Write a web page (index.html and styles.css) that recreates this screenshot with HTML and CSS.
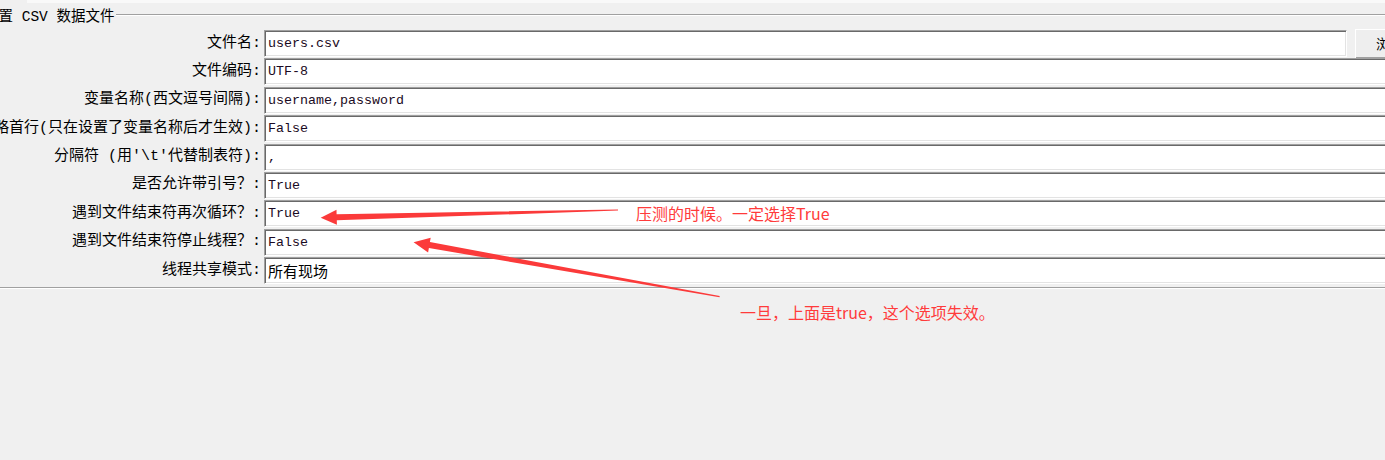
FILE: index.html
```html
<!DOCTYPE html>
<html lang="zh">
<head>
<meta charset="utf-8">
<title>CSV 数据文件设置</title>
<link rel="stylesheet" href="styles.css">
</head>
<body>
<div class="page">
  <div class="topstrip"></div>
  <div class="titlerow">
    <span class="title">设置 CSV 数据文件</span>
    <span class="rule"></span>
  </div>
  <div class="form">
    <div class="lbl">文件名:</div>
    <div class="ctl-row">
      <div class="field first">users.csv</div>
      <div class="btn">浏览...</div>
    </div>
    <div class="lbl">文件编码:</div>
    <div class="field">UTF-8</div>
    <div class="lbl">变量名称(西文逗号间隔):</div>
    <div class="field">username,password</div>
    <div class="lbl">忽略首行(只在设置了变量名称后才生效):</div>
    <div class="field">False</div>
    <div class="lbl">分隔符 (用'\t'代替制表符):</div>
    <div class="field">,</div>
    <div class="lbl">是否允许带引号？:</div>
    <div class="field">True</div>
    <div class="lbl">遇到文件结束符再次循环？:</div>
    <div class="field">True</div>
    <div class="lbl">遇到文件结束符停止线程？:</div>
    <div class="field">False</div>
    <div class="lbl">线程共享模式:</div>
    <div class="field cjk">所有现场</div>
  </div>
  <div class="bottomrule"></div>

  <svg class="overlay" width="1385" height="460" viewBox="0 0 1385 460" xmlns="http://www.w3.org/2000/svg">
    <polygon fill="#fb3a3a" points="618,209.4 336.6,214.3 336.5,209.8 320.7,217.7 336.9,224.8 336.8,220.3 618,210.6"/>
    <polygon fill="#fb3a3a" points="719.7,296.1 429.9,242.1 430.7,237.7 413.6,242.3 428.1,252.5 428.9,248.1 719.5,297.3"/>
  </svg>
  <div class="note note1">压测的时候。一定选择True</div>
  <div class="note note2">一旦，上面是true，这个选项失效。</div>
</div>
</body>
</html>
```

FILE: styles.css
```css
html, body {
  margin: 0;
  padding: 0;
  background: #f0f0f0;
  overflow: hidden;
}

.page {
  position: relative;
  width: 1385px;
  height: 460px;
  overflow: hidden;
  background: #f0f0f0;
  font-family: "Liberation Mono", "Noto Sans CJK SC", monospace;
  color: #000;
}

.topstrip {
  height: 3px;
  margin-left: 27px;
  background: #f9f9f9;
}

.titlerow {
  display: flex;
  align-items: center;
  height: 24px;
  margin-left: -16px;
}

.title {
  font-size: 14.5px;
  line-height: 20px;
  padding-top: 4px;
  white-space: nowrap;
  padding-right: 1px;
}

.rule {
  flex: 1;
  height: 0;
  border-top: 1px solid #a0a0a0;
  border-bottom: 1px solid #ffffff;
  margin-top: 0;
}

.form {
  display: grid;
  grid-template-columns: 264px 1240px;
  grid-auto-rows: 27px;
  row-gap: 1.4px;
  margin-top: 3px;
  width: 1504px;
}

.lbl {
  display: flex;
  justify-content: flex-end;
  align-items: center;
  min-width: 0;
  padding-right: 3px;
  white-space: nowrap;
  font-size: 15px;
  line-height: 20px;
}

.ctl-row {
  display: flex;
  gap: 8px;
  align-items: flex-start;
}

.field {
  box-sizing: border-box;
  height: 27px;
  background: #ffffff;
  border: 1px solid;
  border-color: #a0a0a0 #ffffff #ffffff #a0a0a0;
  box-shadow: inset 1px 1px 0 #696969, inset -1px -1px 0 #e3e3e3;
  padding-left: 3px;
  font-size: 13.33px;
  line-height: 25px;
  white-space: nowrap;
  color: #1a0a22;
}

.field.first {
  width: 1083px;
  flex: none;
}

.field.cjk {
  font-family: "Noto Sans CJK SC", sans-serif;
  font-size: 15px;
  color: #000;
}

.btn {
  box-sizing: border-box;
  flex: none;
  width: 90px;
  height: 30px;
  margin-top: -1px;
  background: #eeeeee;
  border: 1px solid;
  border-color: #ffffff #696969 #696969 #ffffff;
  box-shadow: inset -1px -1px 0 #a0a0a0;
  padding-left: 20px;
  font-family: "Noto Sans CJK SC", sans-serif;
  font-size: 14px;
  line-height: 27px;
  white-space: nowrap;
}

.bottomrule {
  margin-top: 3px;
  height: 0;
  border-top: 1px solid #a0a0a0;
  border-bottom: 1px solid #ffffff;
}

.overlay {
  position: absolute;
  left: 0;
  top: 0;
  pointer-events: none;
}

.note {
  position: absolute;
  font-family: "Noto Sans CJK SC", sans-serif;
  font-size: 16px;
  line-height: 20px;
  color: #ff3b3b;
  white-space: nowrap;
}

.note1 {
  left: 636px;
  top: 203px;
}

.note2 {
  left: 740px;
  top: 302px;
}
```
